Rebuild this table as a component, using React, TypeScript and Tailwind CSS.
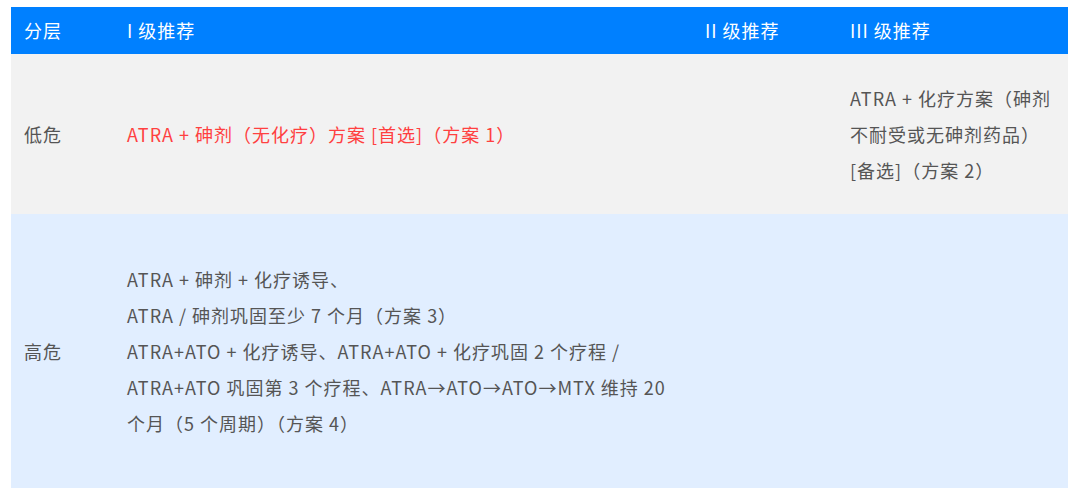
import React from "react";

const font = { fontFamily: '"Noto Sans CJK SC", "Noto Sans", sans-serif' };

export default function App() {
  const cell = "pl-[13px] pr-2 flex items-center";
  return (
    <div className="w-[1080px] h-[499px] bg-white pt-[7px] pl-[11px]" style={font}>
      <div className="w-[1057px] grid grid-cols-[103px_578px_145px_1fr] text-[18px] tracking-[1px]">
        <div className={`${cell} h-[47px] bg-[#0080ff] text-white`}>分层</div>
        <div className={`${cell} h-[47px] bg-[#0080ff] text-white`}>I 级推荐</div>
        <div className={`${cell} h-[47px] bg-[#0080ff] text-white`}>II 级推荐</div>
        <div className={`${cell} h-[47px] bg-[#0080ff] text-white`}>III 级推荐</div>

        <div className={`${cell} h-[160px] bg-[#f2f2f2] text-[#555555]`}>低危</div>
        <div className={`${cell} h-[160px] bg-[#f2f2f2] text-[#ff4040]`}>
          ATRA + 砷剂（无化疗）方案 [首选]（方案 1）
        </div>
        <div className={`${cell} h-[160px] bg-[#f2f2f2]`}></div>
        <div className={`${cell} h-[160px] bg-[#f2f2f2] text-[#555555] leading-[36px] whitespace-nowrap`}>
          <div>
            ATRA + 化疗方案（砷剂
            <br />
            不耐受或无砷剂药品）
            <br />
            [备选]（方案 2）
          </div>
        </div>

        <div className={`${cell} h-[274px] bg-[#e1eeff] text-[#555555]`}>高危</div>
        <div className={`${cell} h-[274px] bg-[#e1eeff] text-[#555555] leading-[36px] whitespace-nowrap`}>
          <div>
            ATRA + 砷剂 + 化疗诱导、
            <br />
            ATRA / 砷剂巩固至少 7 个月（方案 3）
            <br />
            ATRA+ATO + 化疗诱导、ATRA+ATO + 化疗巩固 2 个疗程 /
            <br />
            ATRA+ATO 巩固第 3 个疗程、ATRA→ATO→ATO→MTX 维持 20
            <br />
            个月（5 个周期）（方案 4）
          </div>
        </div>
        <div className={`${cell} h-[274px] bg-[#e1eeff]`}></div>
        <div className={`${cell} h-[274px] bg-[#e1eeff]`}></div>
      </div>
    </div>
  );
}
